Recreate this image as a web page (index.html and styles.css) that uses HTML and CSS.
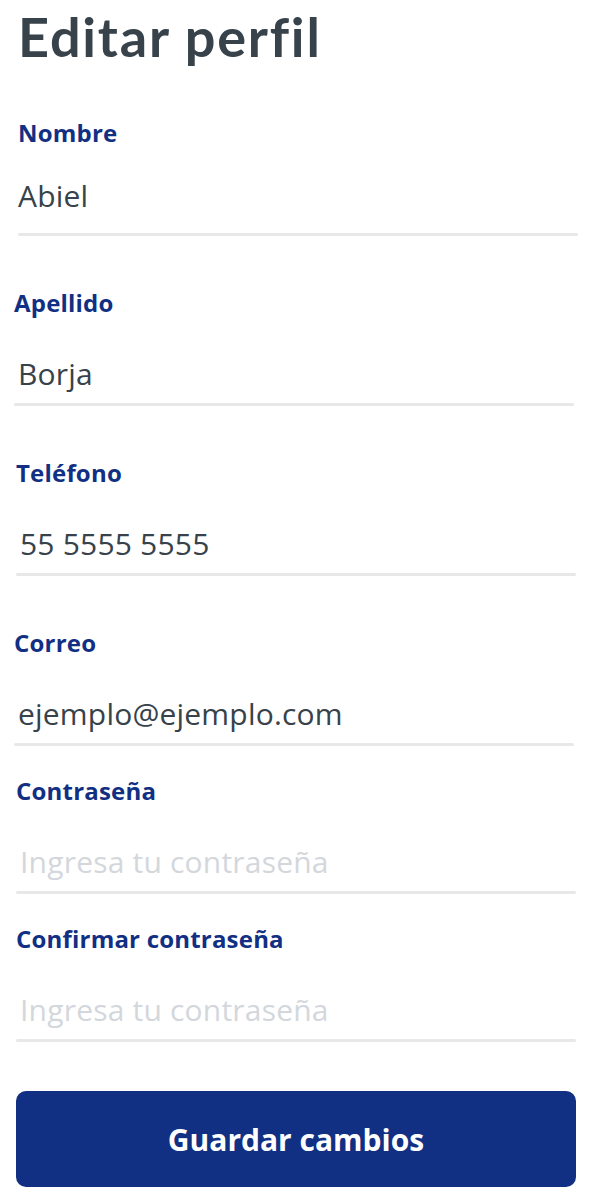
FILE: index.html
```html
<!DOCTYPE html>
<html lang="es">
<head>
<meta charset="utf-8">
<title>Editar perfil</title>
<link rel="stylesheet" href="styles.css">
</head>
<body>
<main class="page">
  <h1 class="title">Editar perfil</h1>
  <form class="form">
    <div class="field field--first field--shift-right">
      <label class="label" for="nombre">Nombre</label>
      <input class="input input--flush" id="nombre" type="text" value="Abiel">
      <div class="rule"></div>
    </div>
    <div class="field field--shift-left">
      <label class="label" for="apellido">Apellido</label>
      <input class="input" id="apellido" type="text" value="Borja">
      <div class="rule"></div>
    </div>
    <div class="field">
      <label class="label" for="telefono">Teléfono</label>
      <input class="input" id="telefono" type="tel" value="55 5555 5555">
      <div class="rule"></div>
    </div>
    <div class="field field--shift-left field--tight">
      <label class="label" for="correo">Correo</label>
      <input class="input" id="correo" type="email" value="ejemplo@ejemplo.com">
      <div class="rule"></div>
    </div>
    <div class="field field--tight">
      <label class="label" for="pass">Contraseña</label>
      <input class="input" id="pass" type="password" placeholder="Ingresa tu contraseña">
      <div class="rule"></div>
    </div>
    <div class="field field--tight">
      <label class="label" for="pass2">Confirmar contraseña</label>
      <input class="input" id="pass2" type="password" placeholder="Ingresa tu contraseña">
      <div class="rule"></div>
    </div>
    <button class="button" type="button">Guardar cambios</button>
  </form>
</main>
</body>
</html>
```

FILE: styles.css
```css
* {
  box-sizing: border-box;
}

html, body {
  margin: 0;
  padding: 0;
  background: #ffffff;
}

body {
  font-family: "Open Sans", "Noto Sans", "Liberation Sans", sans-serif;
  color: #37424a;
}

.page {
  width: 598px;
  padding: 0 22px 0 16px;
}

.title {
  margin: 0;
  padding-top: 5px;
  padding-left: 2px;
  font-family: "Lato", "Open Sans", sans-serif;
  font-weight: 700;
  font-size: 54px;
  line-height: 64px;
  color: #37424a;
  letter-spacing: 1.8px;
}

.form {
  display: flex;
  flex-direction: column;
  padding-top: 49px;
}

.field {
  display: flex;
  flex-direction: column;
  margin-bottom: 52px;
}

.field--tight {
  margin-bottom: 30px;
}

.field--shift-right {
  margin-left: 2px;
  margin-right: -2px;
}

.field--shift-left {
  margin-left: -2px;
  margin-right: 2px;
}

.label {
  font-weight: 700;
  font-size: 24px;
  line-height: 30px;
  letter-spacing: 0.2px;
  color: #112f83;
}

.input {
  margin-top: 30px;
  height: 50px;
  padding: 0 4px;
  border: none;
  outline: none;
  background: transparent;
  font-family: inherit;
  font-size: 30px;
  letter-spacing: 0.2px;
  color: #37424a;
}

.input--flush {
  padding-left: 0;
}

.field--first .input {
  margin-top: 22px;
}

.field--first .rule {
  margin-top: 13px;
}

.input::placeholder {
  color: #d3d7dc;
}

.rule {
  margin-top: 5px;
  height: 3px;
  border-radius: 2px;
  background: #e8e8e8;
}

.button {
  margin-top: 19px;
  height: 96px;
  border: none;
  border-radius: 10px;
  background: #112f83;
  color: #ffffff;
  font-family: inherit;
  font-weight: 700;
  font-size: 30px;
}
```
